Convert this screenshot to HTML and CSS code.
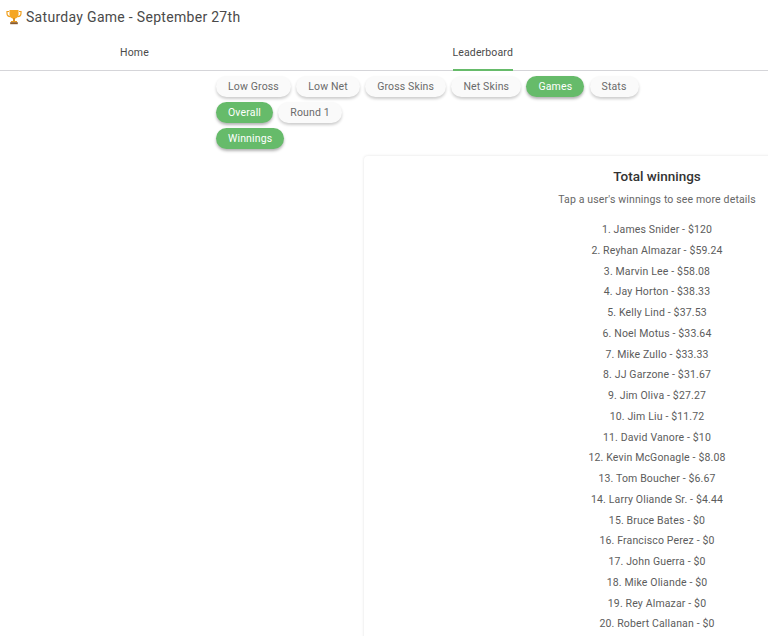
FILE: index.html
```html
<!DOCTYPE html>
<html lang="en">
<head>
<meta charset="utf-8">
<title>Saturday Game - September 27th</title>
<link rel="stylesheet" href="styles.css">
</head>
<body>
<div class="page">
  <header class="title-bar">
    <svg class="trophy" viewBox="0 0 16 16" width="16" height="16" aria-hidden="true">
      <path d="M3 2.500H1v1.700c0 2 1.400 3.300 3.500 3.500M13 2.500h2v1.700c0 2-1.400 3.300-3.500 3.500" fill="none" stroke="#f0a01e" stroke-width="1.200"/>
      <path d="M3.500 1h9v4.500c0 2.400-1.900 4.200-4.500 4.200S3.500 7.900 3.500 5.500z" fill="#f5a623"/>
      <rect x="7.100" y="9" width="1.800" height="3" fill="#d98a14"/>
      <rect x="5" y="12" width="6" height="1.200" fill="#e89a1c"/>
      <rect x="4.200" y="13.200" width="7.600" height="2" fill="#8a5a2a"/>
    </svg>
    <h1 class="title">Saturday Game - September 27th</h1>
  </header>
  <nav class="tabs">
    <a class="tab tab-home">Home</a>
    <a class="tab tab-board">Leaderboard</a>
  </nav>
  <div class="chips">
    <div class="chip-row">
      <span class="chip">Low Gross</span>
      <span class="chip">Low Net</span>
      <span class="chip">Gross Skins</span>
      <span class="chip">Net Skins</span>
      <span class="chip on">Games</span>
      <span class="chip">Stats</span>
    </div>
    <div class="chip-row">
      <span class="chip on">Overall</span>
      <span class="chip">Round 1</span>
    </div>
    <div class="chip-row">
      <span class="chip on">Winnings</span>
    </div>
  </div>
  <section class="card">
    <h2 class="card-title">Total winnings</h2>
    <p class="card-sub">Tap a user's winnings to see more details</p>
    <ul class="list">
      <li>1. James Snider - $120</li>
      <li>2. Reyhan Almazar - $59.24</li>
      <li>3. Marvin Lee - $58.08</li>
      <li>4. Jay Horton - $38.33</li>
      <li>5. Kelly Lind - $37.53</li>
      <li>6. Noel Motus - $33.64</li>
      <li>7. Mike Zullo - $33.33</li>
      <li>8. JJ Garzone - $31.67</li>
      <li>9. Jim Oliva - $27.27</li>
      <li>10. Jim Liu - $11.72</li>
      <li>11. David Vanore - $10</li>
      <li>12. Kevin McGonagle - $8.08</li>
      <li>13. Tom Boucher - $6.67</li>
      <li>14. Larry Oliande Sr. - $4.44</li>
      <li>15. Bruce Bates - $0</li>
      <li>16. Francisco Perez - $0</li>
      <li>17. John Guerra - $0</li>
      <li>18. Mike Oliande - $0</li>
      <li>19. Rey Almazar - $0</li>
      <li>20. Robert Callanan - $0</li>
    </ul>
  </section>
</div>
</body>
</html>
```
FILE: styles.css
```css
html, body {
  margin: 0;
  padding: 0;
  background: #fff;
}
body {
  font-family: Roboto, "Noto Sans", sans-serif;
  color: #424242;
}
.page {
  width: 768px;
  height: 636px;
  overflow: hidden;
}
.title-bar {
  display: flex;
  align-items: center;
  gap: 4px;
  height: 34px;
  padding-left: 6px;
}
.trophy {
  flex: none;
}
.title {
  margin: 0;
  font-size: 14px;
  font-weight: 400;
  letter-spacing: 0.3px;
  color: #4a4a4a;
}
.tabs {
  display: flex;
  height: 36px;
  border-bottom: 1px solid #d5d5d9;
}
.tab {
  display: flex;
  align-items: center;
  justify-content: center;
  font-size: 10.5px;
  letter-spacing: 0.15px;
  color: #4a4a4a;
  height: 36px;
  box-sizing: border-box;
  padding-top: 1px;
}
.tab-home {
  width: 269px;
}
.tab-board {
  width: 59.5px;
  margin-left: 184px;
  border-bottom: 2px solid #66bb6a;
  margin-bottom: -1px;
  height: 37px;
  white-space: nowrap;
}
.chips {
  display: flex;
  flex-direction: column;
  gap: 5px;
  padding: 5px 0 0 216px;
}
.chip-row {
  display: flex;
  gap: 5.25px;
}
.chip {
  display: block;
  height: 21px;
  line-height: 21px;
  padding: 0 12px;
  border-radius: 11px;
  background: #fafafa;
  color: #6a6a6a;
  font-size: 10.5px;
  letter-spacing: 0.15px;
  white-space: nowrap;
  box-shadow: 0 2px 3px rgba(0, 0, 0, 0.2);
}
.chip.on {
  background: #66bb6a;
  color: #fff;
  box-shadow: 0 2px 3px rgba(0, 0, 0, 0.3);
}
.card {
  width: 586px;
  margin: 7px 0 0 364px;
  padding-top: 12px;
  height: 600px;
  box-sizing: border-box;
  border-radius: 4px;
  background: #fff;
  box-shadow: 0 0 3px rgba(0, 0, 0, 0.12);
  text-align: center;
}
.card-title {
  margin: 0;
  font-size: 13.5px;
  line-height: 16px;
  font-weight: 500;
  color: #333;
}
.card-sub {
  margin: 8px 0 0;
  font-size: 10.5px;
  line-height: 16px;
  letter-spacing: 0.15px;
  color: #666;
}
.list {
  list-style: none;
  margin: 12px 0 0;
  padding: 0;
}
.list li {
  height: 20.75px;
  line-height: 20.75px;
  font-size: 10.5px;
  letter-spacing: 0.15px;
  color: #5c5c5c;
}
```
